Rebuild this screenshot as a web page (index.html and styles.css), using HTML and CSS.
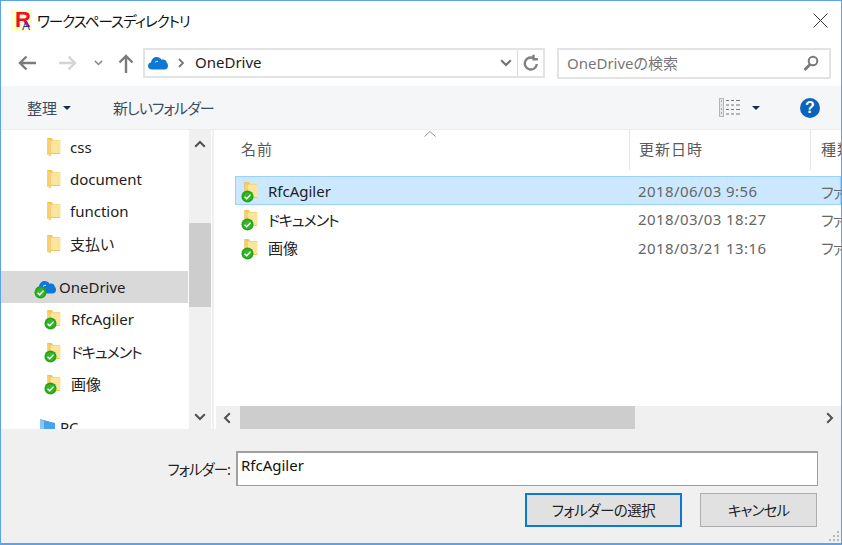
FILE: index.html
```html
<!DOCTYPE html>
<html lang="ja">
<head>
<meta charset="utf-8">
<title>ワークスペースディレクトリ</title>
<link rel="stylesheet" href="styles.css">
</head>
<body>
<svg class="defs" width="0" height="0" aria-hidden="true">
  <defs>
    <symbol id="folder" viewBox="0 0 14 20">
      <path d="M1 1h4l1 2h7v14H1z" fill="#f2c55c"/>
      <path d="M4 3.500h9.500V16H4z" fill="#fbe49c"/>
      <path d="M1 1v17l3 1.500V4L1 2z" fill="#f5cf70"/>
      <path d="M.5 1v17" stroke="#e0b04a" stroke-width=".6" fill="none"/>
    </symbol>
    <symbol id="check" viewBox="0 0 14 14">
      <circle cx="7" cy="7" r="6.500" fill="#26a31c"/>
      <circle cx="7" cy="7" r="4.600" fill="#36b52a"/>
      <path d="M3.800 7.200l2.300 2.300 4.200-4.500" stroke="#fff" stroke-width="1.500" fill="none"/>
    </symbol>
    <symbol id="cloud" viewBox="0 0 20 14">
      <path d="M4 13.500C1.500 13.500 0 12 0 10c0-1.800 1.200-3.200 3-3.400C3.500 3 6 1 8.700 1c2 0 3.800 1 4.800 2.800 .7-.2 1.100-.3 1.600-.3 2 0 3.300 1.300 3.600 3C19.500 7 20 8.500 20 10c0 2-1.500 3.500-3.500 3.500z" fill="#0f78d4"/>
      <path d="M7 6.500c1-1 2-1.500 3-1" stroke="#fff" stroke-width="1" fill="none"/>
    </symbol>
    <symbol id="chev" viewBox="0 0 12 8">
      <path d="M1.200 1.200L6 6l4.800-4.800" stroke="currentColor" stroke-width="2" fill="none"/>
    </symbol>
  </defs>
</svg>

<div class="window">
  <header class="titlebar">
    <span class="logo"><span class="logo-r">R</span><span class="logo-a">A</span></span>
    <span class="title kana">ワークスペースディレクトリ</span>
    <svg class="close" width="15" height="15" viewBox="0 0 15 15"><path d="M.5.500l14 14M14.500.500l-14 14" stroke="#333" stroke-width="1" fill="none"/></svg>
  </header>

  <nav class="navbar">
    <svg class="nav-icon" width="18" height="16" viewBox="0 0 18 16"><path d="M18 8H2.500M8.500 1.500L2 8l6.500 6.500" stroke="#7b7b7b" stroke-width="2.400" fill="none"/></svg>
    <svg class="nav-icon fwd" width="18" height="16" viewBox="0 0 18 16"><path d="M0 8h15.500M9.500 1.500L16 8l-6.500 6.500" stroke="#d4d4d4" stroke-width="2.400" fill="none"/></svg>
    <svg class="nav-drop" width="9" height="6"><use href="#chev"/></svg>
    <svg class="nav-icon up" width="16" height="19" viewBox="0 0 16 19"><path d="M8 19V2.500M1.500 8.500L8 2l6.500 6.500" stroke="#7b7b7b" stroke-width="2.400" fill="none"/></svg>
    <div class="address">
      <svg class="addr-cloud" width="20" height="14"><use href="#cloud"/></svg>
      <svg class="addr-sep" width="6" height="10" viewBox="0 0 6 10"><path d="M1 1l4 4-4 4" stroke="#777" stroke-width="1.800" fill="none"/></svg>
      <span class="addr-text">OneDrive</span>
      <svg class="addr-drop" width="12" height="8"><use href="#chev"/></svg>
      <span class="addr-refresh">
        <svg width="16" height="18" viewBox="0 0 16 18"><path d="M13.800 10a6 6 0 1 1-2.800-5.600M10.500 .8v4.400h4.400" stroke="#808080" stroke-width="2.400" fill="none"/></svg>
      </span>
    </div>
    <div class="search">
      <span class="search-text">OneDriveの検索</span>
      <svg width="16" height="16" viewBox="0 0 16 16"><circle cx="10" cy="6" r="4.300" stroke="#7a7a7a" stroke-width="2" fill="none"/><path d="M7 9.500L1.500 15" stroke="#7a7a7a" stroke-width="2.800"/></svg>
    </div>
  </nav>

  <div class="toolbar">
    <span class="tool organize">整理</span>
    <span class="caret dark"></span>
    <span class="tool newfolder kana">新しいフォルダー</span>
    <span class="toolbar-space"></span>
    <svg class="view" width="21" height="19" viewBox="0 0 21 19">
      <rect x=".5" y=".5" width="4" height="18" fill="#e8e8e8" stroke="#b5b5b5"/>
      <path d="M2 3h1" stroke="#3a6ea5"/><path d="M2 7h1" stroke="#b8a030"/><path d="M2 11h1" stroke="#c8402a"/><path d="M2 15h1" stroke="#666"/>
      <path d="M7 2.500h3M12 2.500h3M17 2.500h4M7 7h3M12 7h3M17 7h4M7 11.500h3M12 11.500h3M17 11.500h4M7 16h3M12 16h3M17 16h4" stroke="#777"/>
    </svg>
    <span class="caret dark viewcaret"></span>
    <span class="help">?</span>
  </div>

  <main class="main">
    <aside class="tree">
      <div class="tree-list">
        <div class="row sub"><svg class="ficon" width="14" height="20"><use href="#folder"/></svg><span>css</span></div>
        <div class="row sub"><svg class="ficon" width="14" height="20"><use href="#folder"/></svg><span>document</span></div>
        <div class="row sub"><svg class="ficon" width="14" height="20"><use href="#folder"/></svg><span>function</span></div>
        <div class="row sub"><svg class="ficon" width="14" height="20"><use href="#folder"/></svg><span>支払い</span></div>
        <div class="row top active">
          <span class="odicon"><svg width="20" height="14"><use href="#cloud"/></svg><svg class="badge" width="13" height="13"><use href="#check"/></svg></span><span>OneDrive</span>
        </div>
        <div class="row sub"><span class="fbadge"><svg class="ficon" width="14" height="20"><use href="#folder"/></svg><svg class="badge" width="13" height="13"><use href="#check"/></svg></span><span>RfcAgiler</span></div>
        <div class="row sub"><span class="fbadge"><svg class="ficon" width="14" height="20"><use href="#folder"/></svg><svg class="badge" width="13" height="13"><use href="#check"/></svg></span><span class="kana">ドキュメント</span></div>
        <div class="row sub"><span class="fbadge"><svg class="ficon" width="14" height="20"><use href="#folder"/></svg><svg class="badge" width="13" height="13"><use href="#check"/></svg></span><span>画像</span></div>
        <div class="row top pc">
          <svg class="pcicon" width="15" height="16" viewBox="0 0 15 16"><path d="M0 0l15 4v12H0z" fill="#4aa3e8"/><path d="M0 0l4 2v14H0z" fill="#8cc6f0"/></svg><span>PC</span>
        </div>
      </div>
      <div class="vscroll">
        <svg class="sb-up" width="12" height="8"><use href="#chev" transform="rotate(180 6 4)"/></svg>
        <div class="vtrack"><div class="vthumb"></div></div>
        <svg class="sb-down" width="12" height="8"><use href="#chev"/></svg>
      </div>
    </aside>
    <div class="splitter"></div>
    <section class="files">
      <div class="colhead">
        <div class="col c-name">名前<svg class="sort" width="12" height="6" viewBox="0 0 12 6"><path d="M.5 5.500L6 .5l5.500 5" stroke="#909090" fill="none"/></svg></div>
        <div class="col c-date">更新日時</div>
        <div class="col c-type">種類</div>
      </div>
      <div class="filelist">
        <div class="frow selected"><span class="fname"><span class="fbadge"><svg class="ficon" width="14" height="20"><use href="#folder"/></svg><svg class="badge" width="13" height="13"><use href="#check"/></svg></span><span>RfcAgiler</span></span><span class="fdate">2018/06/03 9:56</span><span class="ftype kana">ファイル フォルダー</span></div>
        <div class="frow"><span class="fname"><span class="fbadge"><svg class="ficon" width="14" height="20"><use href="#folder"/></svg><svg class="badge" width="13" height="13"><use href="#check"/></svg></span><span class="kana">ドキュメント</span></span><span class="fdate">2018/03/03 18:27</span><span class="ftype kana">ファイル フォルダー</span></div>
        <div class="frow"><span class="fname"><span class="fbadge"><svg class="ficon" width="14" height="20"><use href="#folder"/></svg><svg class="badge" width="13" height="13"><use href="#check"/></svg></span><span>画像</span></span><span class="fdate">2018/03/21 13:16</span><span class="ftype kana">ファイル フォルダー</span></div>
      </div>
      <div class="hscroll">
        <svg class="sb-left" width="8" height="12" viewBox="0 0 8 12"><path d="M6.800 1.200L2 6l4.800 4.800" stroke="#505050" stroke-width="2" fill="none"/></svg>
        <div class="htrack"><div class="hthumb"></div></div>
        <svg class="sb-right" width="8" height="12" viewBox="0 0 8 12"><path d="M1.200 1.200L6 6l-4.800 4.800" stroke="#505050" stroke-width="2" fill="none"/></svg>
      </div>
    </section>
  </main>

  <footer class="footer">
    <div class="field">
      <span class="field-label kana">フォルダー:</span>
      <div class="input">RfcAgiler</div>
    </div>
    <div class="buttons">
      <button class="btn primary">フォルダーの選択</button>
      <button class="btn cancel">キャンセル</button>
    </div>
    <svg class="grip" width="12" height="12" viewBox="0 0 12 12"><path d="M9 1h2v2H9zM5 5h2v2H5zM9 5h2v2H9zM1 9h2v2H1zM5 9h2v2H5zM9 9h2v2H9z" fill="#b8b8b8"/></svg>
  </footer>
</div>
</body>
</html>
```
FILE: styles.css
```css
* { box-sizing: border-box; }
html, body { margin: 0; padding: 0; }
body {
  width: 842px;
  height: 545px;
  overflow: hidden;
  font-family: "Noto Sans", "Noto Sans CJK JP", sans-serif;
  font-size: 15px;
  font-feature-settings: "palt";
  color: #222;
  background: #fff;
}
svg { display: block; flex: none; }
.defs { position: absolute; }
.kana { letter-spacing: -1px; }
.window {
  width: 842px;
  height: 545px;
  border: 1px solid #5ba4ec;
  border-bottom-width: 2px;
  display: flex;
  flex-direction: column;
  background: #fff;
}

.titlebar {
  height: 39px;
  display: flex;
  align-items: center;
  padding-left: 10px;
  padding-right: 13px;
  flex: none;
}
.logo {
  width: 21px;
  height: 21px;
  background: #ffffc8;
  position: relative;
  flex: none;
}
.logo-r {
  position: absolute;
  left: 4px;
  top: -3px;
  font: 700 22px/26px "Liberation Sans", sans-serif;
  color: #e8102c;
}
.logo-a {
  position: absolute;
  left: 11px;
  top: 9px;
  font: 400 12px/14px "Liberation Sans", sans-serif;
  color: #2233d8;
}
.title { margin-left: 5px; font-size: 14.500px; color: #111; }
.close { margin-left: auto; }

.navbar {
  height: 46px;
  display: flex;
  align-items: center;
  padding-left: 17px;
  flex: none;
}
.fwd { margin-left: 23px; }
.nav-drop { margin-left: 17px; color: #8a8a8a; }
.up { margin-left: 15px; }
.address {
  width: 402px;
  height: 30px;
  margin-left: 9px;
  border: 2px solid #e3e3e3;
  display: flex;
  align-items: center;
  padding-left: 3px;
}
.addr-sep { margin-left: 10px; }
.addr-text { margin-left: 11px; margin-bottom: 2px; font-size: 15px; color: #222; }
.addr-drop { margin-left: auto; color: #707070; }
.addr-refresh {
  width: 26px;
  height: 100%;
  margin-left: 5px;
  border-left: 1px solid #dcdcdc;
  display: flex;
  align-items: center;
  justify-content: center;
}
.search {
  width: 274px;
  height: 31px;
  margin-left: 12px;
  border: 2px solid #e3e3e3;
  display: flex;
  align-items: center;
  justify-content: space-between;
  padding: 0 10px 0 8px;
}
.search-text { color: #777; font-size: 15px; margin-bottom: 2px; }

.toolbar {
  height: 44px;
  background: #f5f6f8;
  border-bottom: 1px solid #ececec;
  display: flex;
  align-items: center;
  padding-left: 26px;
  flex: none;
  color: #3c4a5c;
}
.tool { font-size: 15px; color: #3d4b5e; }
.caret {
  width: 0;
  height: 0;
  border-left: 4px solid transparent;
  border-right: 4px solid transparent;
  border-top: 4px solid #1b2a44;
  margin-left: 6px;
}
.newfolder { margin-left: 42px; }
.toolbar-space { flex: 1; }
.viewcaret { margin-left: 12px; }
.help {
  width: 20px;
  height: 20px;
  margin: 0 21px 0 40px;
  border-radius: 50%;
  background: #0a63bd;
  color: #fff;
  font: 700 16px/20px "Liberation Sans", sans-serif;
  text-align: center;
}

.main {
  height: 299px;
  display: flex;
  flex: none;
  overflow: hidden;
}
.tree {
  width: 210px;
  display: flex;
  flex: none;
}
.tree-list { width: 187px; flex: none; overflow: hidden; padding-top: .5px; }
.row {
  height: 32.400px;
  display: flex;
  align-items: center;
  font-size: 15px;
  color: #222;
}
.row.sub { padding-left: 46px; }
.row.sub > span:last-child { margin-left: 9px; }
.fbadge { width: 15px; height: 20px; position: relative; flex: none; }
.fbadge .badge { position: absolute; left: -3px; top: 8px; }
.row.top { padding-left: 35px; }
.active { background: #d9d9d9; margin-top: 10.500px; }
.odicon { position: relative; width: 20px; height: 14px; margin-right: 3px; flex: none; }
.odicon .badge { position: absolute; left: -2px; top: 6px; }
.row.pc { margin-top: 10.500px; padding-left: 39px; }
.pc span { margin-left: 5px; }
.vscroll {
  width: 22px;
  margin-left: 1px;
  background: #f0f0f0;
  display: flex;
  flex-direction: column;
  align-items: center;
  flex: none;
}
.sb-up { margin-top: 10px; color: #505050; }
.vtrack { flex: 1; width: 100%; padding-top: 75px; }
.vthumb { width: 100%; height: 84px; background: #cdcdcd; }
.sb-down { margin-bottom: 8px; color: #505050; }
.splitter { width: 2px; margin-left: 1px; background: #f0f0f0; flex: none; }

.files {
  flex: 1;
  min-width: 0;
  display: flex;
  flex-direction: column;
  overflow: hidden;
}
.colhead {
  height: 40px;
  display: flex;
  color: #5a5a5a;
  font-size: 15px;
  flex: none;
}
.col {
  height: 100%;
  display: flex;
  align-items: center;
  padding-left: 9px;
  padding-bottom: 4px;
  border-right: 1px solid #e5e5e5;
  position: relative;
  letter-spacing: 1px;
  flex: none;
}
.c-name { width: 416px; padding-left: 27px; }
.c-date { width: 181px; }
.c-type { width: 60px; border-right: 0; white-space: nowrap; padding-left: 10px; }
.sort { position: absolute; left: 210px; top: 1px; }
.filelist { flex: 1; padding-top: 6px; }
.frow {
  height: 28.400px;
  margin-left: 21px;
  display: flex;
  align-items: center;
  white-space: nowrap;
  border: 1px solid transparent;
  font-size: 15px;
}
.selected { height: 29px; padding-top: 1px; background: #cce8ff; border-color: #99d1ff; }
.fname { width: 402px; padding-left: 8px; display: flex; align-items: center; flex: none; }
.fname > span:last-child { margin-left: 9px; color: #222; }
.fname .badge { top: 9px; }
.fdate { width: 183px; color: #666; flex: none; letter-spacing: .4px; }
.ftype { color: #666; }
.hscroll {
  height: 23px;
  display: flex;
  align-items: center;
  background: #f0f0f0;
  margin-left: 2px;
  flex: none;
}
.sb-left { margin-left: 7px; }
.htrack { flex: 1; height: 100%; margin-left: 9px; }
.hthumb { width: 395px; height: 100%; background: #cdcdcd; }
.sb-right { margin-right: 7px; }

.footer {
  flex: 1;
  background: #f0f0f0;
  position: relative;
  padding: 22px 23px 0 0;
  display: flex;
  flex-direction: column;
}
.field { display: flex; align-items: center; justify-content: flex-end; }
.field-label { margin-right: 6px; font-size: 14.500px; color: #222; }
.input {
  width: 582px;
  height: 35px;
  background: #fff;
  border: 1px solid #a0a0a0;
  border-top-width: 2px;
  border-left-width: 2px;
  padding: 0 0 0 3px;
  font-size: 15px;
  line-height: 24px;
  color: #111;
}
.buttons {
  display: flex;
  justify-content: flex-end;
  gap: 18px;
  margin-top: 7px;
  margin-right: 1px;
}
.btn {
  height: 34px;
  background: #e1e1e1;
  border: 1px solid #adadad;
  font-family: inherit;
  font-feature-settings: inherit;
  font-size: 14.500px;
  color: #222;
  padding: 0 0 2px;
  letter-spacing: -.5px;
}
.primary { width: 157px; border: 2px solid #0a78d7; }
.cancel { width: 117px; letter-spacing: -.9px; }
.grip { position: absolute; right: 1px; bottom: 1px; }
```
